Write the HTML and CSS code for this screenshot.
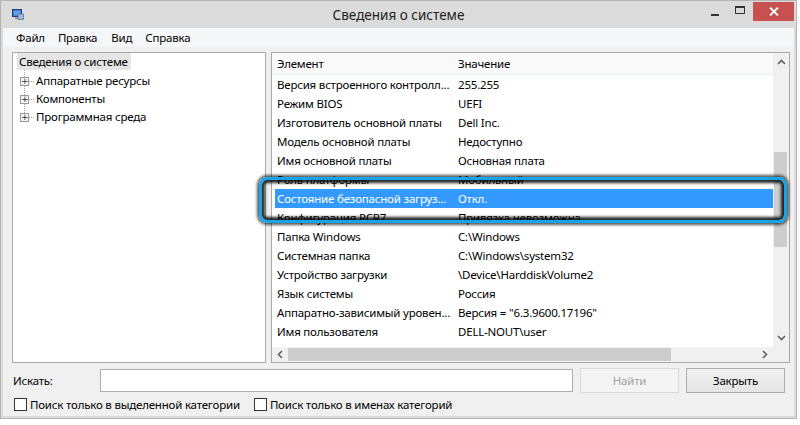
FILE: index.html
```html
<!DOCTYPE html>
<html lang="ru">
<head>
<meta charset="utf-8">
<link rel="stylesheet" href="styles.css">
</head>
<body>
<div class="window">
  <div class="titlebar">
    <svg class="appicon" width="12" height="11" viewBox="0 0 12 11">
      <rect x="0.5" y="0.5" width="9" height="7" fill="#2f63b8" stroke="#1d3f80"/>
      <rect x="1.5" y="1.5" width="7" height="5" fill="#5ea3e8"/>
      <rect x="6" y="5" width="5.5" height="5.5" fill="#9ab8d8" stroke="#5a78a0" stroke-width="0.8"/>
      <rect x="3" y="8.5" width="4" height="1.5" fill="#8a8a8a"/>
    </svg>
    <div class="title">Сведения о системе</div>
    <div class="caption-btns">
      <div class="cbtn min"><span></span></div>
      <div class="cbtn max"><span></span></div>
      <div class="cbtn close">
        <svg width="10" height="9" viewBox="0 0 10 9"><path d="M1 0.5 L9 8.5 M9 0.5 L1 8.5" stroke="#fff" stroke-width="1.8"/></svg>
      </div>
    </div>
  </div>
  <div class="client">
    <div class="menubar">
      <span class="menu">Файл</span>
      <span class="menu">Правка</span>
      <span class="menu">Вид</span>
      <span class="menu">Справка</span>
    </div>
    <div class="main">
      <div class="tree">
        <div class="tree-root">Сведения о системе</div>
        <div class="tree-children">
          <div class="tree-item"><span class="expander">+</span><span class="dots"></span><span>Аппаратные ресурсы</span></div>
          <div class="tree-item"><span class="expander">+</span><span class="dots"></span><span>Компоненты</span></div>
          <div class="tree-item"><span class="expander">+</span><span class="dots"></span><span>Программная среда</span></div>
        </div>
      </div>
      <div class="list">
        <div class="list-body">
          <div class="list-content">
            <div class="list-header">
              <div class="c1">Элемент</div>
              <div class="c2">Значение</div>
            </div>
            <div class="row"><div class="c1">Версия встроенного контролл...</div><div class="c2">255.255</div></div>
            <div class="row"><div class="c1">Режим BIOS</div><div class="c2">UEFI</div></div>
            <div class="row"><div class="c1">Изготовитель основной платы</div><div class="c2">Dell Inc.</div></div>
            <div class="row"><div class="c1">Модель основной платы</div><div class="c2">Недоступно</div></div>
            <div class="row"><div class="c1">Имя основной платы</div><div class="c2">Основная плата</div></div>
            <div class="row"><div class="c1">Роль платформы</div><div class="c2">Мобильный</div></div>
            <div class="row selected"><div class="c1">Состояние безопасной загруз...</div><div class="c2">Откл.</div></div>
            <div class="row"><div class="c1">Конфигурация PCR7</div><div class="c2">Привязка невозможна</div></div>
            <div class="row"><div class="c1">Папка Windows</div><div class="c2">C:\Windows</div></div>
            <div class="row"><div class="c1">Системная папка</div><div class="c2">C:\Windows\system32</div></div>
            <div class="row"><div class="c1">Устройство загрузки</div><div class="c2">\Device\HarddiskVolume2</div></div>
            <div class="row"><div class="c1">Язык системы</div><div class="c2">Россия</div></div>
            <div class="row"><div class="c1">Аппаратно-зависимый уровен...</div><div class="c2">Версия = "6.3.9600.17196"</div></div>
            <div class="row"><div class="c1">Имя пользователя</div><div class="c2">DELL-NOUT\user</div></div>
          </div>
          <div class="vscroll">
            <svg class="arrow" width="9" height="6" viewBox="0 0 9 6"><path d="M1 5 L4.5 1.5 L8 5" fill="none" stroke="#606060" stroke-width="1.6"/></svg>
            <div class="vtrack"><div class="vthumb"></div></div>
            <svg class="arrow" width="9" height="6" viewBox="0 0 9 6"><path d="M1 1 L4.5 4.5 L8 1" fill="none" stroke="#606060" stroke-width="1.6"/></svg>
          </div>
        </div>
        <div class="hscroll">
          <svg class="harrow" width="6" height="9" viewBox="0 0 6 9"><path d="M5 1 L1.5 4.5 L5 8" fill="none" stroke="#606060" stroke-width="1.6"/></svg>
          <div class="htrack"><div class="hthumb"></div></div>
          <svg class="harrow" width="6" height="9" viewBox="0 0 6 9"><path d="M1 1 L4.5 4.5 L1 8" fill="none" stroke="#606060" stroke-width="1.6"/></svg>
          <div class="corner"></div>
        </div>
      </div>
    </div>
    <div class="search">
      <label class="search-label">Искать:</label>
      <div class="input"></div>
      <div class="btn disabled">Найти</div>
      <div class="btn">Закрыть</div>
    </div>
    <div class="checks">
      <span class="check"><span class="box"></span>Поиск только в выделенной категории</span>
      <span class="check"><span class="box"></span>Поиск только в именах категорий</span>
    </div>
  </div>
  <div class="highlight"></div>
</div>
</body>
</html>
```
FILE: styles.css
```css
* { box-sizing: border-box; }
html, body { margin: 0; padding: 0; background: #fff; }
body {
  font-family: "Noto Sans", "Open Sans", sans-serif;
  font-size: 11.5px;
  letter-spacing: -0.2px;
  color: #000;
}
.window {
  position: relative;
  width: 797px;
  height: 419px;
  background: #dbdbdb;
  border: 1px solid #b4b4b4;
  display: flex;
  flex-direction: column;
}
.titlebar {
  height: 27px;
  display: flex;
  align-items: flex-start;
  position: relative;
}
.appicon { margin: 8px 0 0 11px; }
.title {
  position: absolute;
  left: 0; right: 0; top: 5px;
  text-align: center;
  font-size: 13.5px;
  letter-spacing: 0;
  color: #222;
  pointer-events: none;
}
.caption-btns {
  margin-left: auto;
  display: flex;
  align-items: flex-start;
  margin-right: 2px;
  margin-top: 1px;
}
.cbtn { height: 19px; display: flex; align-items: center; justify-content: center; }
.cbtn.min { width: 24px; }
.cbtn.min span { display: block; width: 8px; height: 2px; background: #333; margin-top: 6px; }
.cbtn.max { width: 25px; }
.cbtn.max span { display: block; width: 10px; height: 8px; border: 1px solid #333; border-top-width: 2px; margin-top: -4px; }
.cbtn.close { width: 41px; background: #c75050; margin-left: 1px; }

.client {
  flex: 1;
  margin: 0 2px 2px 2px;
  background: #f0f0f0;
  display: flex;
  flex-direction: column;
}
.menubar {
  height: 19px;
  background: #f5f6f7;
  display: flex;
  align-items: center;
  padding-left: 7px;
}
.menu { padding: 0 5px 0 6px; line-height: 17px; }
.menu:nth-child(2) { padding-left: 8px; }
.menu:nth-child(3) { padding-left: 9px; }
.menu:nth-child(4) { padding-left: 8px; }

.main {
  display: flex;
  padding: 5px 0 0 9px;
  gap: 5px;
  height: 319px;
}
.tree {
  width: 254px;
  height: 311px;
  background: #fff;
  border: 1px solid #a9a9a9;
  padding: 0 0 0 4px;
}
.tree-root {
  display: inline-block;
  background: #e5e5e5;
  padding: 0 3px 0 2px;
  line-height: 17px;
  height: 17px;
  vertical-align: top;
}
.tree-children {
  position: relative;
  padding-top: 2px;
}
.tree-children::before {
  content: "";
  position: absolute;
  left: 7px; top: 0; bottom: 9px;
  border-left: 1px dotted #a0a0a0;
}
.tree-item {
  display: flex;
  align-items: center;
  height: 18px;
  line-height: 18px;
  position: relative;
}
.expander {
  width: 9px; height: 9px;
  border: 1px solid #9a9a9a;
  background: #f4f4f4;
  font-size: 9px;
  line-height: 7px;
  text-align: center;
  color: #333;
  margin-left: 3px;
  position: relative;
  z-index: 1;
  font-family: "DejaVu Sans", sans-serif;
  letter-spacing: 0;
}
.dots { width: 5px; border-top: 1px dotted #a0a0a0; margin-right: 2px; }

.list {
  width: 519px;
  height: 311px;
  background: #fff;
  border: 1px solid #a9a9a9;
  display: flex;
  flex-direction: column;
}
.list-body { flex: 1; display: flex; min-height: 0; }
.list-content { flex: 1; overflow: hidden; padding-left: 3px; }
.list-header {
  display: flex;
  height: 22px;
  align-items: center;
  background: #f9f9f9;
  border-bottom: 1px solid #eaf0f7;
  margin-left: -3px;
  padding-left: 5px;
}
.row {
  display: flex;
  height: 19px;
  align-items: center;
  padding-left: 2px;
  white-space: nowrap;
}
.list-header .c1, .row .c1 { width: 181px; flex: none; overflow: hidden; }
.row .c2 { white-space: nowrap; }
.row.selected { background: #3399ff; color: #fff; }

.vscroll {
  width: 16px;
  background: #f0f0f0;
  display: flex;
  flex-direction: column;
  align-items: center;
}
.vscroll .arrow { margin: 6px 0; flex: none; }
.vtrack { flex: 1; width: 100%; position: relative; }
.vthumb {
  position: absolute;
  left: 1px; right: 2px;
  top: 81px; height: 95px;
  background: #cdcdcd;
}
.hscroll {
  height: 15px;
  background: #f0f0f0;
  display: flex;
  align-items: center;
}
.harrow { margin: 0 5px; flex: none; }
.htrack { flex: 1; height: 13px; position: relative; }
.hthumb { position: absolute; left: 0; width: 383px; top: 0; bottom: 0; background: #cdcdcd; }
.corner { width: 16px; height: 15px; background: #f0f0f0; }

.search {
  display: flex;
  align-items: center;
  height: 26px;
  margin-top: 1px;
  padding-left: 10px;
}
.search-label { width: 87px; }
.input {
  width: 473px;
  height: 23px;
  background: #fff;
  border: 1px solid #abadb3;
}
.btn {
  width: 99px;
  height: 25px;
  margin-left: 7px;
  border: 1px solid #acacac;
  background: linear-gradient(#f0f0f0, #e5e5e5);
  display: flex;
  align-items: center;
  justify-content: center;
}
.btn.disabled {
  border-color: #d9d9d9;
  background: #f4f4f4;
  color: #a0a0a0;
}
.checks {
  display: flex;
  align-items: center;
  height: 22px;
  padding-left: 11px;
  gap: 14px;
}
.check { display: flex; align-items: center; }
.box {
  width: 13px; height: 13px;
  border: 1px solid #333;
  background: #fff;
  margin-right: 3px;
}
.highlight {
  position: absolute;
  left: 258px; top: 176px;
  width: 528px; height: 46px;
  border: 3px solid #17a4e8;
  border-radius: 8px;
  box-shadow: 0 0 3px 2px rgba(0,0,0,0.65), inset 0 0 3px 3px rgba(0,0,0,0.85);
  pointer-events: none;
}
```
